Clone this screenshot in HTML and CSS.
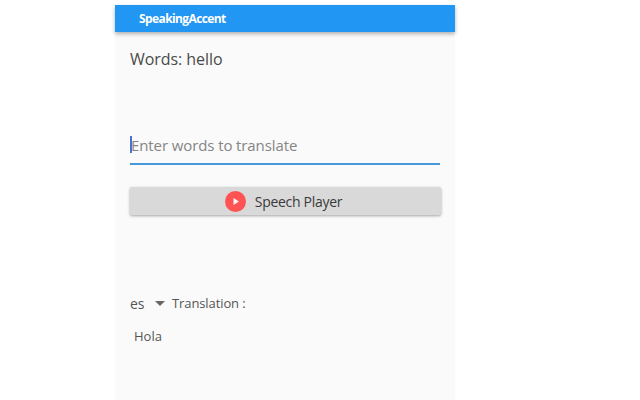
FILE: index.html
```html
<!DOCTYPE html>
<html lang="en">
<head>
<meta charset="utf-8">
<title>SpeakingAccent</title>
<link rel="stylesheet" href="styles.css">
</head>
<body>
<main class="panel">
  <header class="appbar"><span class="appbar-title">SpeakingAccent</span></header>
  <section class="content">
    <div class="words">Words: hello</div>
    <div class="field">
      <span class="caret"></span>
      <span class="placeholder">Enter words to translate</span>
    </div>
    <button class="player" type="button">
      <svg class="play" width="21" height="21" viewBox="0 0 21 21"><circle cx="10.5" cy="10.5" r="10.5" fill="#ff5252"/><path d="M8.5 7v7l5.5-3.5z" fill="#f5f5f5"/></svg>
      <span class="player-label">Speech Player</span>
    </button>
    <div class="lang-row">
      <span class="lang">es</span>
      <span class="arrow"></span>
      <span class="translation-label">Translation :</span>
    </div>
    <div class="result">Hola</div>
  </section>
</main>
</body>
</html>
```

FILE: styles.css
```css
html, body {
  margin: 0;
  height: 100%;
  background: #fff;
  overflow: hidden;
}
body {
  padding: 5px 0 0 115px;
  box-sizing: border-box;
  font-family: "Open Sans", "Noto Sans", sans-serif;
  color: #333;
}
.panel {
  width: 340px;
  height: 395px;
  background: #fafafa;
}
.appbar {
  height: 27px;
  background: #2196f3;
  display: flex;
  align-items: center;
  padding-left: 24px;
  box-shadow: 0 2px 4px rgba(0, 0, 0, 0.3);
}
.appbar-title {
  color: #fff;
  font-size: 12px;
  font-weight: 700;
  letter-spacing: -0.6px;
}
.content {
  padding: 15px 15px 0;
}
.words {
  font-size: 16px;
  line-height: 24px;
  letter-spacing: -0.05px;
  color: #4a4a4a;
}
.field {
  margin-top: 60px;
  height: 32px;
  width: 310px;
  border-bottom: 2px solid #4698d8;
  display: flex;
  align-items: flex-start;
  position: relative;
}
.caret {
  position: absolute;
  left: 0;
  top: 5px;
  width: 2px;
  height: 17px;
  background: #4a72d0;
}
.placeholder {
  font-size: 15px;
  line-height: 19px;
  letter-spacing: -0.1px;
  color: #858585;
  padding: 5px 0 0 1px;
}
.player {
  margin-top: 22px;
  width: 311px;
  height: 28px;
  border: 0;
  border-radius: 2px;
  padding: 0 4px 0 0;
  background: #d9d9d9;
  box-shadow: 0 1px 3px rgba(0, 0, 0, 0.35);
  display: flex;
  align-items: center;
  justify-content: center;
  gap: 9px;
  font-family: inherit;
}
.play {
  flex: none;
}
.player-label {
  font-size: 14px;
  letter-spacing: -0.3px;
  color: #3a3a3a;
}
.lang-row {
  margin-top: 78px;
  display: flex;
  align-items: center;
  height: 20px;
}
.lang {
  font-size: 14px;
  color: #555;
  width: 25px;
}
.arrow {
  width: 0;
  height: 0;
  border-left: 5px solid transparent;
  border-right: 5px solid transparent;
  border-top: 5px solid #666;
  margin-right: 7px;
}
.translation-label {
  font-size: 13px;
  color: #555;
  letter-spacing: -0.1px;
}
.result {
  margin-top: 14px;
  padding-left: 4px;
  font-size: 13px;
  line-height: 18px;
  color: #555;
}
```
